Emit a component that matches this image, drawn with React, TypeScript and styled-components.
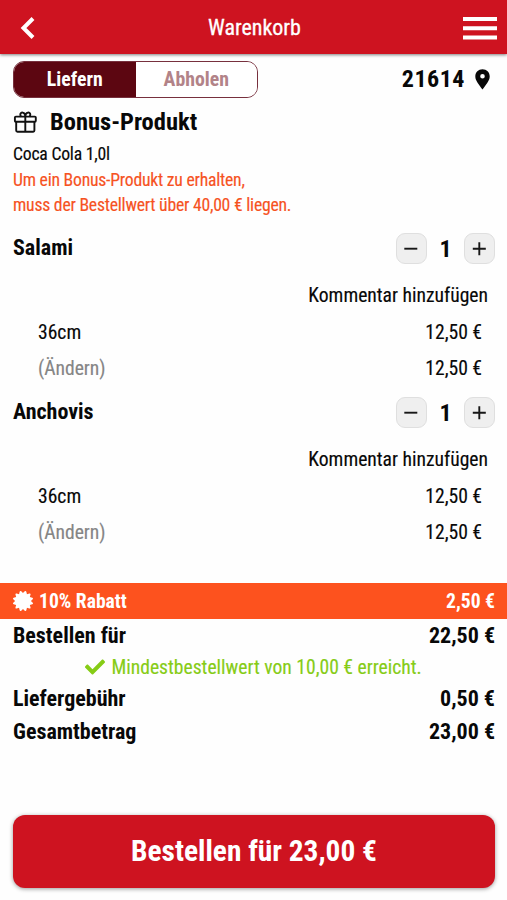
import React from "react";
import styled, { createGlobalStyle } from "styled-components";
import { FaCertificate, FaCheck } from "react-icons/fa";

const GlobalStyle = createGlobalStyle`
  * { box-sizing: border-box; }
  body {
    margin: 0;
    background: #fefefe;
    color: #080808;
    font-family: "Roboto Condensed", Roboto, "Liberation Sans", sans-serif;
    font-stretch: condensed;
    font-size: 19.6px;
  }
  button { font: inherit; font-stretch: inherit; letter-spacing: inherit; color: inherit; border: 0; padding: 0; background: none; }
`;

const Page = styled.main`
  display: flex;
  flex-direction: column;
  width: 507px;
  height: 900px;
  overflow: hidden;
`;

const Header = styled.header`
  display: grid;
  grid-template-columns: 188px 1fr auto;
  align-items: center;
  flex: none;
  height: 54px;
  padding: 2px 10px 0 20px;
  background: #ce1320;
  color: #fff;
  box-shadow: 0 1px 3px rgba(0, 0, 0, 0.5);
`;

const Title = styled.h1`
  margin: 0;
  padding-bottom: 1px;
  font-size: 22px;
  font-weight: 400;
  -webkit-text-stroke: 0.3px currentColor;
`;

const IconButton = styled.button<{ $end?: boolean }>`
  display: flex;
  justify-self: ${(p) => (p.$end ? "end" : "start")};
`;

const ModeBar = styled.section`
  display: flex;
  justify-content: space-between;
  align-items: center;
  height: 36px;
  margin: 7px 17px 0 13px;
`;

const Toggle = styled.div`
  display: flex;
  width: 245px;
  height: 37px;
  border: 1px solid #77303d;
  border-radius: 11px;
  overflow: hidden;
`;

const ToggleOption = styled.button<{ $active?: boolean }>`
  flex: 1;
  font-size: 19.8px;
  font-weight: 700;
  color: ${(p) => (p.$active ? "#fff" : "#b28388")};
  background: ${(p) => (p.$active ? "#5c0611" : "#fff")};
`;

const Zip = styled.div`
  display: flex;
  align-items: center;
  gap: 10px;
  font-size: 24px;
  font-weight: 700;
  letter-spacing: 0.5px;
`;

const Bonus = styled.section`
  display: flex;
  flex-direction: column;
  height: 121px;
  padding: 10px 13px 0;
`;

const BonusTitle = styled.h2`
  display: flex;
  align-items: center;
  gap: 13px;
  height: 30px;
  margin: 0 0 6px;
  font-size: 24.5px;
`;

const BonusLine = styled.p<{ $warn?: boolean }>`
  margin: 0;
  font-size: 17.7px;
  letter-spacing: -0.24px;
  line-height: 25.6px;
  color: ${(p) => (p.$warn ? "#f6521f" : "inherit")};
  -webkit-text-stroke: 0.15px currentColor;
`;

const Item = styled.article`
  height: 164px;
  padding-top: 13px;
`;

const ItemHead = styled.div`
  display: flex;
  justify-content: space-between;
  height: 34px;
  padding: 0 12px 0 13px;
`;

const ItemName = styled.h3`
  margin: 0;
  font-size: 22px;
  line-height: 33px;
`;

const Stepper = styled.div`
  display: grid;
  grid-template-columns: 31px 37px 31px;
  align-items: center;
  height: 35px;
  text-align: center;
  font-size: 24px;
  font-weight: 700;
`;

const StepButton = styled.button`
  display: flex;
  align-items: center;
  justify-content: center;
  height: 31px;
  border: 1px solid #dfdfdf;
  border-radius: 9px;
  background: #efefef;
`;

const Comment = styled.div`
  height: 34px;
  margin-top: 16px;
  padding-right: 19px;
  text-align: right;
  line-height: 30px;
  -webkit-text-stroke: 0.15px currentColor;
`;

const Detail = styled.div<{ $muted?: boolean }>`
  display: flex;
  justify-content: space-between;
  padding: 0 25px 0 38px;
  line-height: 35.5px;
  -webkit-text-stroke: 0.15px currentColor;
  span:first-child {
    color: ${(p) => (p.$muted ? "#858585" : "inherit")};
  }
`;

const Discount = styled.div`
  display: flex;
  align-items: center;
  height: 36px;
  margin-top: 37px;
  padding: 0 12px 0 13px;
  gap: 6px;
  background: #fd521e;
  color: #fff;
  font-weight: 700;
  span:last-child { margin-left: auto; }
`;

const Total = styled.div`
  display: flex;
  justify-content: space-between;
  padding: 0 12px 0 13px;
  font-size: 22px;
  font-weight: 700;
  line-height: 33px;
`;

const Minimum = styled.div`
  display: flex;
  align-items: center;
  justify-content: center;
  gap: 6px;
  height: 29.5px;
  padding-top: 1px;
  color: #86cc16;
  -webkit-text-stroke: 0.15px currentColor;
`;

const OrderButton = styled.button`
  flex: none;
  height: 73px;
  margin: auto 12px 12px 13px;
  padding-bottom: 2px;
  border-radius: 12px;
  background: #ce1320;
  color: #fff;
  font-size: 29.4px;
  font-weight: 700;
  box-shadow: 0 1px 4px rgba(0, 0, 0, 0.4);
`;

const Sign = ({ plus }: { plus?: boolean }) => (
  <svg width="15" height="15" viewBox="0 0 15 15" stroke="#171717" strokeWidth="1.9">
    <path d={plus ? "M.8 7.7h13M7.3 1.2v13" : "M.3 7.7h13"} />
  </svg>
);

const GiftIcon = () => (
  <svg width="24" height="24" viewBox="0 0 24 24" fill="none" stroke="#111" strokeWidth="1.9" strokeLinejoin="round">
    <rect x="1.9" y="6.6" width="20.9" height="5.2" rx="1" />
    <path d="M3.2 11.8v8.7q0 1.2 1.2 1.2h15.8q1.2 0 1.2-1.2v-8.7M12.3 6.6v14.9" />
    <path d="M12.3 6.6C12.3 1.8 7.2 1.4 7.3 4.8q0 1 .8 1.8M12.3 6.6c0-4.8 5.1-5.2 5-1.8q0 1-.8 1.8" />
  </svg>
);

const PinIcon = () => (
  <svg width="15" height="21" viewBox="0 0 15 21" fill="currentColor">
    <path
      fillRule="evenodd"
      d="M7.5.3C3.4.3.3 3.4.3 7.4c0 4.4 4.1 8.5 7.2 13.1 3.1-4.6 7.2-8.7 7.2-13.1C14.7 3.4 11.6.3 7.5.3zm0 4.6a2.3 2.3 0 1 1 0 4.6 2.3 2.3 0 0 1 0-4.6z"
    />
  </svg>
);

const items = [
  { name: "Salami", size: "36cm", price: "12,50 €" },
  { name: "Anchovis", size: "36cm", price: "12,50 €" },
];

export default function App() {
  return (
    <>
      <GlobalStyle />
      <Page>
        <Header>
          <IconButton aria-label="Zurück">
            <svg width="15" height="22" viewBox="0 0 15 22" fill="none" stroke="#fff" strokeWidth="4">
              <path d="M13 1.5 3.5 11l9.5 9.5" />
            </svg>
          </IconButton>
          <Title>Warenkorb</Title>
          <IconButton $end aria-label="Menü">
            <svg width="34" height="23" viewBox="0 0 34 23" fill="#fff">
              <path d="M0 0h34v4H0zM0 9.3h34v4H0zM0 18.5h34v4H0z" />
            </svg>
          </IconButton>
        </Header>
        <ModeBar>
          <Toggle>
            <ToggleOption $active>Liefern</ToggleOption>
            <ToggleOption>Abholen</ToggleOption>
          </Toggle>
          <Zip>
            21614
            <PinIcon />
          </Zip>
        </ModeBar>
        <Bonus>
          <BonusTitle>
            <GiftIcon />
            Bonus-Produkt
          </BonusTitle>
          <BonusLine>Coca Cola 1,0l</BonusLine>
          <BonusLine $warn>Um ein Bonus-Produkt zu erhalten,</BonusLine>
          <BonusLine $warn>muss der Bestellwert über 40,00 € liegen.</BonusLine>
        </Bonus>
        {items.map((item) => (
          <Item key={item.name}>
            <ItemHead>
              <ItemName>{item.name}</ItemName>
              <Stepper>
                <StepButton aria-label="Weniger"><Sign /></StepButton>
                <span>1</span>
                <StepButton aria-label="Mehr"><Sign plus /></StepButton>
              </Stepper>
            </ItemHead>
            <Comment>Kommentar hinzufügen</Comment>
            <Detail><span>{item.size}</span><span>{item.price}</span></Detail>
            <Detail $muted><span>(Ändern)</span><span>{item.price}</span></Detail>
          </Item>
        ))}
        <Discount>
          <FaCertificate size={20} />
          <span>10% Rabatt</span>
          <span>2,50 €</span>
        </Discount>
        <Total><span>Bestellen für</span><span>22,50 €</span></Total>
        <Minimum>
          <FaCheck size={20} />
          <span>Mindestbestellwert von 10,00 € erreicht.</span>
        </Minimum>
        <Total><span>Liefergebühr</span><span>0,50 €</span></Total>
        <Total><span>Gesamtbetrag</span><span>23,00 €</span></Total>
        <OrderButton>Bestellen für 23,00 €</OrderButton>
      </Page>
    </>
  );
}
